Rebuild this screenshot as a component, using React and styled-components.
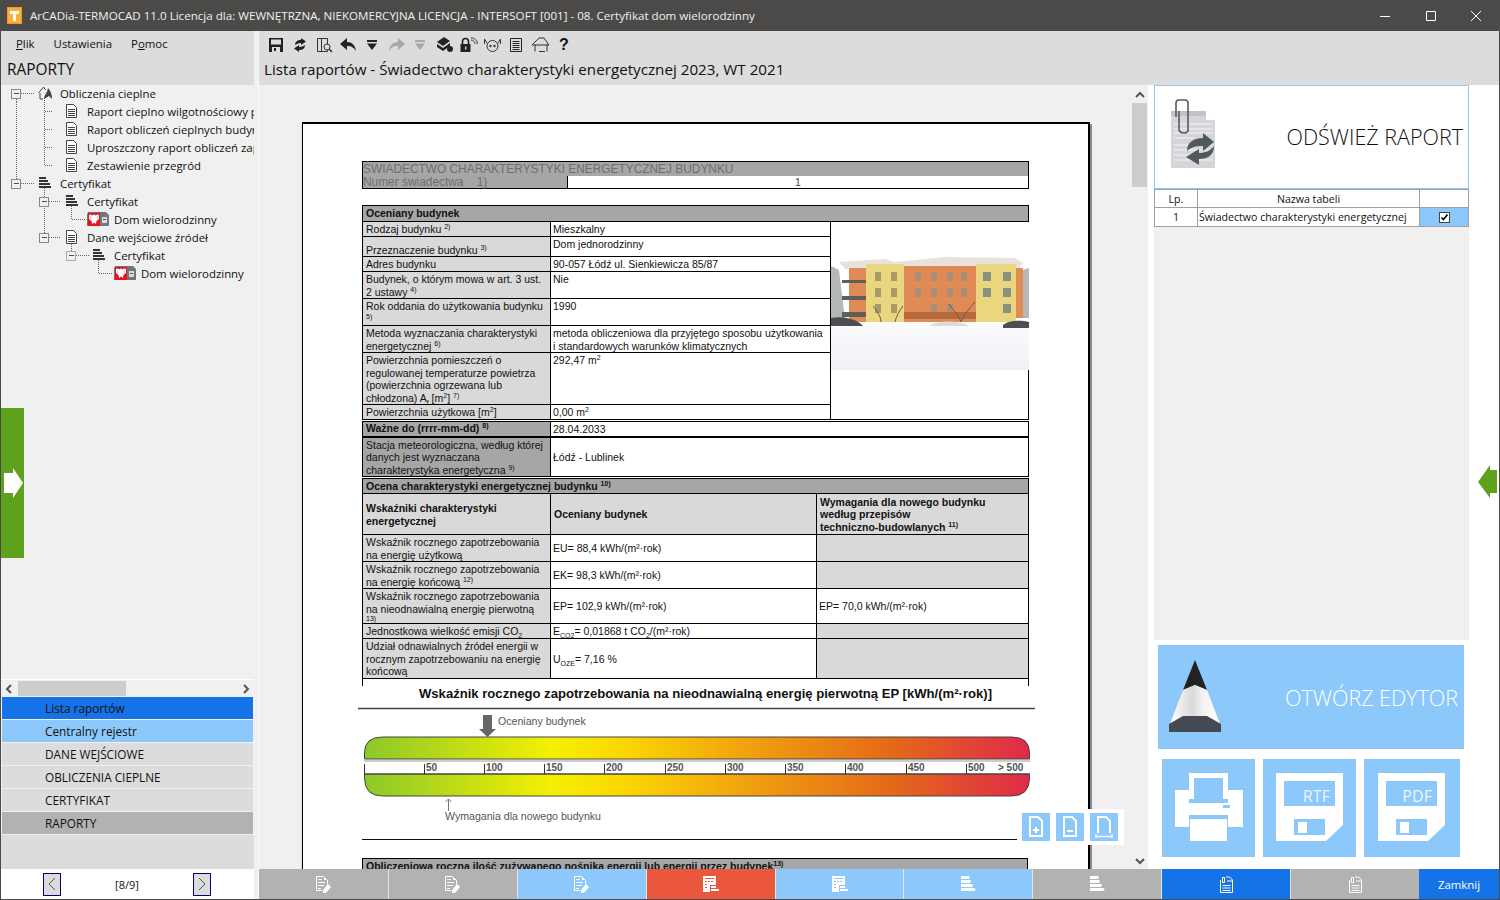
import React from "react";
import styled, { createGlobalStyle } from "styled-components";

const UI_FONT = `"Open Sans", "Noto Sans", sans-serif`;

// --- drawings ---

const AppLogo = () => (
  <svg width="15" height="17" viewBox="0 0 15 17">
    <rect width="15" height="17" fill="#f39a1e" />
    <rect x="1" y="1" width="13" height="15" fill="#f7b23d" />
    <path d="M3 4h9v3H9v7H6V7H3z" fill="#fff" />
  </svg>
);

const SaveIcon = () => (
  <svg width="16" height="16" viewBox="0 0 16 16">
    <path d="M1 1h14v14H1z" fill="#222" />
    <path d="M3 2.500h10v5H3z" fill="#ddd" />
    <path d="M4 10h8v5H4z" fill="#ddd" />
    <path d="M6 11h2v3H6z" fill="#222" />
  </svg>
);

const SyncIcon = () => (
  <svg width="16" height="16" viewBox="0 0 16 16" fill="#222">
    <path d="M3 8c0-3 2-5 6-5V1l5 3.500L9 8V6C6 6 5 7 3 8z" />
    <path d="M13 8c0 3-2 5-6 5v2l-5-3.500L7 8v2c3 0 4-1 6-2z" />
  </svg>
);

const PreviewIcon = () => (
  <svg width="17" height="16" viewBox="0 0 17 16" fill="none" stroke="#333">
    <path d="M1.500 1.500h10v13h-10zM5.500 1.500v13" />
    <circle cx="11" cy="10" r="3" fill="#ddd" />
    <path d="M13 12l3 3" strokeWidth="1.6" />
  </svg>
);

const UndoIcon = ({ color = "#222", flip }) => (
  <svg width="17" height="15" viewBox="0 0 17 15" fill={color}>
    <path
      transform={flip ? "matrix(-1 0 0 1 17 0)" : undefined}
      d="M7 1v4c5 0 8 3 9 9-2-3-4-5-9-5v4L0 7z"
    />
  </svg>
);

const DropIcon = ({ color = "#222" }) => (
  <svg width="12" height="12" viewBox="0 0 12 12" fill={color}>
    <path d="M1 1h10v2H1zM1 4.500h10L6 11z" />
  </svg>
);

const HatIcon = () => (
  <svg width="17" height="16" viewBox="0 0 17 16" fill="#222">
    <path d="M8 0l6 4-7 5-6-4z" />
    <path d="M1 7l6 4 7-5v3l-7 5-6-4z" />
    <circle cx="14" cy="12" r="3" />
  </svg>
);

const LockIcon = () => (
  <svg width="19" height="16" viewBox="0 0 19 16">
    <path d="M3.500 7V4.500a3 3 0 0 1 6 0V7" fill="none" stroke="#222" strokeWidth="1.6" />
    <path d="M1.500 7h10v8h-10z" fill="#222" />
    <path d="M6 9.500h1.400v3H6z" fill="#ddd" />
    <path d="M12 3c2 0 4 2 4 4M12 .8c3.500 0 6.400 3 6.400 6.200" fill="none" stroke="#333" />
  </svg>
);

const RobotIcon = () => (
  <svg width="19" height="16" viewBox="0 0 19 16" fill="none" stroke="#333">
    <circle cx="9.500" cy="9" r="5.500" />
    <path d="M4 6L1.500 2v5M15 6l2.500-4v5" />
    <circle cx="7.500" cy="9" r=".8" fill="#333" />
    <circle cx="11.500" cy="9" r=".8" fill="#333" />
  </svg>
);

const ListIcon = () => (
  <svg width="14" height="16" viewBox="0 0 14 16" fill="none" stroke="#222">
    <path d="M1.500 1.500h11v13h-11z" />
    <path d="M3.500 4.500h7M3.500 6.500h7M3.500 8.500h7M3.500 10.500h7M3.500 12.500h7" />
  </svg>
);

const HouseIcon = () => (
  <svg width="19" height="16" viewBox="0 0 19 16" fill="none" stroke="#333">
    <path d="M1 8l7-7h5l5 7M4 7.500v7M16 7.500v7M1 8h17" />
    <path d="M8 14.500h6" />
  </svg>
);

const RefreshDoc = () => (
  <svg width="46" height="70" viewBox="0 0 46 70">
    <path d="M1 12h35v9h9v48H1z" fill="#d6d6da" />
    <path d="M1 12h35v5H1z" fill="#c2c2c8" />
    <path d="M4 25h38M4 30h38M4 34h38M4 39h20M4 46h38M4 51h38M4 56h38M4 61h38" stroke="#f4f4f4" />
    <path d="M6 18V4q0-3 3-3h6q3 0 3 3v27q0 3-4 3t-5-3V12" fill="none" stroke="#555b63" strokeWidth="1.6" />
    <path d="M17 52c0-8 6-13 16-13v-5l11 9-11 9v-5c-7 0-12 1-16 5z" fill="#515960" />
    <path d="M44 47c0 9-6 13-15 13v6l-13-8 13-8v4c6 0 11-2 15-7z" fill="#515960" />
  </svg>
);

const Pencil = () => (
  <svg width="52" height="72" viewBox="0 0 52 72">
    <defs>
      <linearGradient id="penBody" x1="0" x2="1" y1="0" y2="0">
        <stop offset="0" stopColor="#fff" />
        <stop offset=".45" stopColor="#d9d9d9" />
        <stop offset=".65" stopColor="#f2f2f2" />
        <stop offset="1" stopColor="#fff" />
      </linearGradient>
    </defs>
    <path d="M26 0l12 30-12-5-12 5z" fill="#222" />
    <path d="M14 30l12-5 12 5 13 34-13-7H14L1 64z" fill="url(#penBody)" />
    <path d="M0 64l14-8h24l14 8v8H0z" fill="#454a52" />
  </svg>
);

const Printer = () => (
  <svg width="68" height="70" viewBox="0 0 68 70" fill="#fff">
    <path d="M14 0h39v26H14zM19 5v21h29V5z" fillRule="evenodd" />
    <path d="M0 17h14v13h39V17h15v37H53V42H14v12H0z" />
    <path d="M15 46h37v22H15z" />
    <path d="M48 32h7v3h-7z" fill="#8cc9fa" />
  </svg>
);

const Floppy = ({ label }) => (
  <svg width="68" height="70" viewBox="0 0 68 70">
    <path d="M0 0h67v52L50 68H0z" fill="#fff" />
    <path d="M8 8h51v25H8z" fill="#8cc9fa" />
    <text x="54" y="29" textAnchor="end" fontFamily="Noto Sans, sans-serif" fontSize="16" fill="#e6f3fe">{label}</text>
    <path d="M18 46h31v16H18z" fill="#8cc9fa" />
    <path d="M22 49h9v11h-9z" fill="#fff" />
  </svg>
);

const Magnify = ({ kind }) => (
  <svg width="18" height="22" viewBox="0 0 18 22" fill="none" stroke="#fff" strokeWidth="2">
    <path d={kind === "fit" ? "M3 17V1h8l4 4v12" : "M3 1h8l4 4v15H3z"} />
    {kind === "plus" && <path d="M9 11v6M6 14h6" />}
    {kind === "minus" && <path d="M6 15h6" />}
    {kind === "fit" && <path d="M1 20.500h16M1 18v5M17 18v5" strokeWidth="1.400" />}
  </svg>
);

const BarDocPen = () => (
  <svg width="15" height="17" viewBox="0 0 15 17">
    <path d="M.5.500h7l4 4v4M.5.500v14H6" fill="none" stroke="#fff" />
    <path d="M2 3h4v1H2zM2 6h7v1H2zM2 9h6v1H2zM2 12h3v1H2zM8 1v3h3z" fill="#fff" />
    <path d="M12 8l3 3-5 6H7v-3z" fill="#fff" />
  </svg>
);

const BarCalc = () => (
  <svg width="17" height="16" viewBox="0 0 17 16" fill="#fff">
    <path d="M1 0h13v9H8v7H1zM3 2v1h9V2zM3 5v1h2V5zM6 5v1h2V5zM9 5v1h2V5zM3 8v1h2V8zM3 11v1h2v-1z" fillRule="evenodd" />
    <path d="M9 10h5v2H9zM9 13h8v2H9z" />
  </svg>
);

const BarStack = () => (
  <svg width="15" height="16" viewBox="0 0 15 16" fill="#fff">
    <path d="M0 0h8l1 1.500L8 3H0zM0 4h9l1 1.500L9 7H0zM0 8h11l1 1.500L11 11H0zM0 12h13l2 1.500-2 1.500H0z" />
  </svg>
);

const BarClipDoc = () => (
  <svg width="14" height="17" viewBox="0 0 14 17" fill="none" stroke="#fff">
    <path d="M1.500 4v12.500h12V4l-3-3H7" />
    <path d="M3.500 1.500h2v5h-2zM8 5h5M3.500 9.500h8M3.500 12h8M3.500 14.500h8" />
  </svg>
);

const TREE_DOC = (x) => (
  <g transform={`translate(${x} 2)`} fill="none" stroke="#444">
    <path d="M.5.500h7l3 3v10h-10z" fill="#fff" />
    <path d="M2 5.500h7M2 7.500h7M2 9.500h7M2 11.500h7" />
  </g>
);

const TREE_STACK = (x) => (
  <g transform={`translate(${x} 3)`} fill="#333">
    <path d="M0 0h7v2H0zM0 3h9v2H0zM0 6h11v2H0zM0 9h12v2H0z" />
  </g>
);

const TREE_HOUSE = (x) => (
  <g transform={`translate(${x} 2)`}>
    <path d="M.5 7l5-6 2 3M2 7v6h3" fill="none" stroke="#444" />
    <path d="M6 13c0-4 3-5 4-11 3 3 4 7 4 11l-3-3z" fill="#444" />
  </g>
);

const TREE_CERT = (x) => (
  <g transform={`translate(${x} 2)`}>
    <path d="M1 0h18l3 3v11H0V3z" fill="#6f767d" />
    <path d="M1 1h12v13H1z" fill="#e8141c" />
    <path d="M7 2l1 1.500 2.500-1L12 3v4L9.500 9 9 12l-2-1.500L5 12l-.5-3L2 7V3l1.500-.5L6 3.500z" fill="#fff" />
    <path d="M3.500 4v3M10.500 4v3" stroke="#e8a0a0" strokeWidth=".6" />
    <path d="M15 5h5v6h-5z" fill="#d9d9d9" />
    <path d="M16 7h3v1h-3z" fill="#555" />
  </g>
);

const ICONS = { doc: TREE_DOC, stack: TREE_STACK, house: TREE_HOUSE, cert: TREE_CERT };

const TREE_ROWS = [
  { text: "Obliczenia cieplne", textX: 59, icon: "house", iconX: 37, box: 15, lines: "M15.500 9V18M20 9.500H33M43.500 14V18" },
  { text: "Raport cieplno wilgotnościowy przegród", textX: 86, icon: "doc", iconX: 65, lines: "M15.500 0V18M43.500 0V18M44 9.500H51" },
  { text: "Raport obliczeń cieplnych budynku", textX: 86, icon: "doc", iconX: 65, lines: "M15.500 0V18M43.500 0V18M44 9.500H51" },
  { text: "Uproszczony raport obliczeń zapotrzebowania", textX: 86, icon: "doc", iconX: 65, lines: "M15.500 0V18M43.500 0V18M44 9.500H51" },
  { text: "Zestawienie przegród", textX: 86, icon: "doc", iconX: 65, lines: "M15.500 0V18M43.500 0V9.500H51" },
  { text: "Certyfikat", textX: 59, icon: "stack", iconX: 38, box: 15, lines: "M15.500 0V5M20 9.500H33M43.500 14V18" },
  { text: "Certyfikat", textX: 86, icon: "stack", iconX: 65, box: 43, lines: "M43.500 0V18M48 9.500H60M70.500 14V18" },
  { text: "Dom wielorodzinny", textX: 113, icon: "cert", iconX: 86, lines: "M43.500 0V18M70.500 0V9.500H85" },
  { text: "Dane wejściowe źródeł", textX: 86, icon: "doc", iconX: 65, box: 43, lines: "M43.500 0V5M48 9.500H60M70.500 14V18" },
  { text: "Certyfikat", textX: 113, icon: "stack", iconX: 92, box: 70, light: true, lines: "M70.500 0V5M75 9.500H88M97.500 14V18" },
  { text: "Dom wielorodzinny", textX: 140, icon: "cert", iconX: 113, lines: "M97.500 0V9.500H112" },
];

const TreeRowItem = ({ row }) => (
  <TreeRow>
    <svg width={row.textX} height="18" viewBox={`0 0 ${row.textX} 18`}>
      <path d={row.lines} stroke="#666" strokeDasharray="1 1" fill="none" shapeRendering="crispEdges" />
      {row.box && (
        <g>
          <rect x={row.box - 4.5} y="5.500" width="9" height="9" fill="#f0f0f0" stroke={row.light ? "#aaa" : "#888"} />
          <path d={`M${row.box - 2} 9.500h5`} stroke="#36508c" shapeRendering="crispEdges" />
        </g>
      )}
      {ICONS[row.icon](row.iconX)}
    </svg>
    <TreeText>{row.text}</TreeText>
  </TreeRow>
);

const BuildingPhoto = () => (
  <svg width="198" height="148" viewBox="0 0 198 148">
    <defs>
      <linearGradient id="snow" x1="0" x2="0" y1="0" y2="1">
        <stop offset="0" stopColor="#fbfbfc" />
        <stop offset="1" stopColor="#eff1f5" />
      </linearGradient>
      <filter id="soft" x="0" y="0" width="1" height="1">
        <feGaussianBlur stdDeviation=".55" />
      </filter>
    </defs>
    <rect width="198" height="148" fill="#fff" />
    <g filter="url(#soft)">
      <path d="M0 44l8 4 6 50H0zM186 50l12-4v50h-12z" fill="#b4b8b6" />
      <path d="M8 40l46-3 10 3 50-5 70 1 8 5-4 6H14z" fill="#e8e2dc" />
      <path d="M18 46h17v54H18zM73 44h72v56H73zM185 46h7v50h-7z" fill="#e08a55" />
      <path d="M35 42h38v58H35zM145 42h40v58h-40z" fill="#ead67f" />
      <path d="M44 50h6v9h-6zM60 50h6v9h-6zM44 66h6v9h-6zM60 66h6v9h-6zM44 82h6v9h-6zM60 82h6v9h-6z" fill="#a79a68" />
      <path d="M84 50h6v9h-6zM100 50h6v9h-6zM116 50h6v9h-6zM130 50h6v9h-6zM84 66h6v9h-6zM100 66h6v9h-6zM116 66h6v9h-6zM130 66h6v9h-6zM100 82h6v9h-6zM116 82h6v9h-6z" fill="#a98e76" />
      <path d="M152 50h8v9h-8zM172 50h8v9h-8zM152 66h8v9h-8zM172 66h8v9h-8zM172 82h8v9h-8z" fill="#89907f" />
      <path d="M11 58h24v3H11zM11 74h24v4H11zM11 90h24v5H11z" fill="#5e5e58" />
      <path d="M73 90h72v7H73z" fill="#b86a3e" />
      <path d="M0 100h198v48H0z" fill="url(#snow)" />
      <path d="M0 96c10-2 25 0 32 8H0zM172 103c6-5 18-5 26-3v6h-26z" fill="#4c5052" />
      <path d="M98 104c8-6 30-6 40 0z" fill="#d9dcde" />
      <path d="M130 100c-3-8-8-12-12-18M130 100c3-8 9-14 14-20M50 100c0-6-5-12-8-16M64 100c1-6 5-12 8-16" stroke="#6a5a4a" fill="none" />
    </g>
  </svg>
);

const CHART_TICKS = [
  { x: 66, label: "50" }, { x: 126, label: "100" }, { x: 186, label: "150" }, { x: 246, label: "200" },
  { x: 307, label: "250" }, { x: 367, label: "300" }, { x: 427, label: "350" }, { x: 487, label: "400" },
  { x: 548, label: "450" }, { x: 608, label: "500" },
];

const EnergyChart = () => (
  <svg width="677" height="155" viewBox="0 0 677 155" fontFamily="Liberation Sans, Arial, sans-serif">
    <defs>
      <linearGradient id="scale" x1="0" x2="1" y1="0" y2="0">
        <stop offset="0" stopColor="#8cc82a" />
        <stop offset=".28" stopColor="#f4f000" />
        <stop offset=".38" stopColor="#fbd900" />
        <stop offset=".55" stopColor="#f2a80c" />
        <stop offset=".8" stopColor="#e4671a" />
        <stop offset="1" stopColor="#df2a4a" />
      </linearGradient>
    </defs>
    <rect width="677" height="155" fill="#fff" />
    <text x="347.500" y="12" textAnchor="middle" fontSize="13.1" fontWeight="700" fill="#111">
      Wskaźnik rocznego zapotrzebowania na nieodnawialną energię pierwotną EP [kWh/(m²·rok)]
    </text>
    <path d="M0 22.500h677" stroke="#444" strokeWidth="1.500" />
    <path d="M125 29h9v14h4l-8.500 8-8.500-8h4z" fill="#666" />
    <text x="140" y="39" fontSize="10.600" fill="#555">Oceniany budynek</text>
    <path d="M6.500 73v-6q0-16 18-16h629q18 0 18 16v6z" fill="url(#scale)" stroke="#444" />
    <path d="M6 75h666" stroke="#999" />
    <path d="M6.500 88v4q0 18 18 18h629q18 0 18-18v-4z" fill="url(#scale)" stroke="#444" />
    <path d="M6 88h666" stroke="#444" />
    <path d="M6.500 78v10" stroke="#333" />
    {CHART_TICKS.map((t) => (
      <g key={t.label}>
        <path d={`M${t.x}.5 78v10`} stroke="#333" />
        <text x={t.x + 2} y="85" fontSize="10" fontWeight="700" fill="#555">{t.label}</text>
      </g>
    ))}
    <text x="640" y="85" fontSize="10" fontWeight="700" fill="#555">&gt; 500</text>
    <path d="M90.500 125v-12m-3 3l3-3 3 3" fill="none" stroke="#777" />
    <text x="87" y="134" fontSize="10.600" fill="#555">Wymagania dla nowego budynku</text>
    <path d="M4 153.500h656" stroke="#111" />
  </svg>
);

// --- data ---

const NAV_ITEMS = [
  { label: "Lista raportów", tone: "strong", height: 22 },
  { label: "Centralny rejestr", tone: "light", height: 22 },
  { label: "DANE WEJŚCIOWE", tone: "plain", height: 22 },
  { label: "OBLICZENIA CIEPLNE", tone: "plain", height: 22 },
  { label: "CERTYFIKAT", tone: "plain", height: 22 },
  { label: "RAPORTY", tone: "dim", height: 22 },
];

const BAR_ITEMS = [
  { tone: "gray", icon: <BarDocPen /> },
  { tone: "gray", icon: <BarDocPen /> },
  { tone: "light", icon: <BarDocPen /> },
  { tone: "red", icon: <BarCalc /> },
  { tone: "light", icon: <BarCalc /> },
  { tone: "light", icon: <BarStack /> },
  { tone: "gray", icon: <BarStack /> },
  { tone: "strong", icon: <BarClipDoc /> },
  { tone: "gray", icon: <BarClipDoc /> },
];

const App = () => (
  <>
    <GlobalStyle />
    <Window>
      <TitleBar>
        <AppLogo />
        <TitleText>
          ArCADia-TERMOCAD 11.0 Licencja dla: WEWNĘTRZNA, NIEKOMERCYJNA LICENCJA - INTERSOFT [001] - 08. Certyfikat dom wielorodzinny
        </TitleText>
        <WindowButtons>
          <svg width="10" height="10" viewBox="0 0 10 10"><path d="M0 5.500h10" stroke="#fff" /></svg>
          <svg width="10" height="10" viewBox="0 0 10 10"><path d="M.5.500h9v9h-9z" stroke="#fff" fill="none" /></svg>
          <svg width="10" height="10" viewBox="0 0 10 10"><path d="M0 0l10 10M10 0L0 10" stroke="#fff" /></svg>
        </WindowButtons>
      </TitleBar>
      <Body>
        <LeftPanel>
          <LeftHeader>
            <Menu>
              <MenuItem><u>P</u>lik</MenuItem>
              <MenuItem>Ustawienia</MenuItem>
              <MenuItem>P<u>o</u>moc</MenuItem>
            </Menu>
            <PanelTitle>RAPORTY</PanelTitle>
          </LeftHeader>
          <Tree>
            {TREE_ROWS.map((row, i) => (
              <TreeRowItem key={i} row={row} />
            ))}
          </Tree>
          <HScroll>
            <ScrollChevron viewBox="0 0 8 10"><path d="M6 1L2 5l4 4" /></ScrollChevron>
            <HThumb />
            <ScrollChevron viewBox="0 0 8 10"><path d="M2 1l4 4-4 4" /></ScrollChevron>
          </HScroll>
          <Nav>
            {NAV_ITEMS.map((item) => (
              <NavItem key={item.label} $tone={item.tone} $height={item.height}>{item.label}</NavItem>
            ))}
          </Nav>
          <NavFiller />
          <Pager>
            <PagerButton>
              <svg width="8" height="14" viewBox="0 0 8 14"><path d="M7 1L1 7l6 6" fill="none" stroke="#555" /></svg>
            </PagerButton>
            <PagerLabel>[8/9]</PagerLabel>
            <PagerButton>
              <svg width="8" height="14" viewBox="0 0 8 14"><path d="M1 1l6 6-6 6" fill="none" stroke="#555" /></svg>
            </PagerButton>
          </Pager>
        </LeftPanel>
        <MainColumn>
          <MainHeader>
            <Toolbar>
              <ToolButton><SaveIcon /></ToolButton>
              <ToolButton><SyncIcon /></ToolButton>
              <ToolButton><PreviewIcon /></ToolButton>
              <ToolButton><UndoIcon /></ToolButton>
              <ToolButton><DropIcon /></ToolButton>
              <ToolButton><UndoIcon flip color="#a8a8a8" /></ToolButton>
              <ToolButton><DropIcon color="#a8a8a8" /></ToolButton>
              <ToolButton><HatIcon /></ToolButton>
              <ToolButton><LockIcon /></ToolButton>
              <ToolButton><RobotIcon /></ToolButton>
              <ToolButton><ListIcon /></ToolButton>
              <ToolButton><HouseIcon /></ToolButton>
              <ToolButton><HelpMark>?</HelpMark></ToolButton>
            </Toolbar>
            <MainTitle>Lista raportów - Świadectwo charakterystyki energetycznej 2023, WT 2021</MainTitle>
          </MainHeader>
          <Workspace>
            <Viewport>
              <Page>
                <HeadTable>
                  <colgroup><col width="205" /><col width="461" /></colgroup>
                  <tbody>
                    <Row $h={14}><HeadCell colSpan={2}>ŚWIADECTWO CHARAKTERYSTYKI ENERGETYCZNEJ BUDYNKU</HeadCell></Row>
                    <Row $h={13}>
                      <HeadCell>Numer świadectwa&nbsp;&nbsp;&nbsp; 1)</HeadCell>
                      <HeadValue>1</HeadValue>
                    </Row>
                  </tbody>
                </HeadTable>

                <SheetTable $gap={16}>
                  <colgroup><col width="188" /><col width="280" /><col width="198" /></colgroup>
                  <tbody>
                    <Row $h={16}><TitleCell colSpan={3}>Oceniany budynek</TitleCell></Row>
                    <Row $h={15}>
                      <LabelCell>Rodzaj budynku <Sup>2)</Sup></LabelCell>
                      <Cell>Mieszkalny</Cell>
                      <PhotoCell rowSpan={8}><BuildingPhoto /></PhotoCell>
                    </Row>
                    <Row $h={20}>
                      <LabelCell $align="bottom">Przeznaczenie budynku <Sup>3)</Sup></LabelCell>
                      <Cell>Dom jednorodzinny</Cell>
                    </Row>
                    <Row $h={15}><LabelCell>Adres budynku</LabelCell><Cell>90-057 Łódź ul. Sienkiewicza 85/87</Cell></Row>
                    <Row $h={27}>
                      <LabelCell>Budynek, o którym mowa w art. 3 ust. 2 ustawy <Sup>4)</Sup></LabelCell>
                      <Cell>Nie</Cell>
                    </Row>
                    <Row $h={27}>
                      <LabelCell>Rok oddania do użytkowania budynku <Sup>5)</Sup></LabelCell>
                      <Cell>1990</Cell>
                    </Row>
                    <Row $h={27}>
                      <LabelCell>Metoda wyznaczania charakterystyki energetycznej <Sup>6)</Sup></LabelCell>
                      <Cell>metoda obliczeniowa dla przyjętego sposobu użytkowania<br />i standardowych warunków klimatycznych</Cell>
                    </Row>
                    <Row $h={52}>
                      <LabelCell>Powierzchnia pomieszczeń o regulowanej temperaturze powietrza (powierzchnia ogrzewana lub chłodzona) A<Sub>f</Sub> [m<Sup>2</Sup>] <Sup>7)</Sup></LabelCell>
                      <Cell>292,47 m<Sup>2</Sup></Cell>
                    </Row>
                    <Row $h={14}>
                      <LabelCell>Powierzchnia użytkowa [m<Sup>2</Sup>]</LabelCell>
                      <Cell>0,00 m<Sup>2</Sup></Cell>
                    </Row>
                  </tbody>
                </SheetTable>

                <SheetTable $gap={1}>
                  <colgroup><col width="188" /><col width="478" /></colgroup>
                  <tbody>
                    <Row $h={15}>
                      <TitleCell>Ważne do (rrrr-mm-dd) <Sup>8)</Sup></TitleCell>
                      <Cell>28.04.2033</Cell>
                    </Row>
                  </tbody>
                </SheetTable>

                <SheetTable $gap={0}>
                  <colgroup><col width="188" /><col width="478" /></colgroup>
                  <tbody>
                    <Row $h={39}>
                      <DarkCell>Stacja meteorologiczna, według której danych jest wyznaczana charakterystyka energetyczna <Sup>9)</Sup></DarkCell>
                      <Cell $align="middle">Łódź - Lublinek</Cell>
                    </Row>
                  </tbody>
                </SheetTable>

                <SheetTable $gap={1}>
                  <colgroup><col width="188" /><col width="266" /><col width="212" /></colgroup>
                  <tbody>
                    <Row $h={15}><TitleCell colSpan={3}>Ocena charakterystyki energetycznej budynku <Sup>10)</Sup></TitleCell></Row>
                    <Row $h={41}>
                      <LabelCell $strong $align="middle">Wskaźniki charakterystyki<br />energetycznej</LabelCell>
                      <LabelCell $strong $align="middle">Oceniany budynek</LabelCell>
                      <LabelCell $strong $align="middle">Wymagania dla nowego budynku<br />według przepisów<br />techniczno-budowlanych <Sup>11)</Sup></LabelCell>
                    </Row>
                    <Row $h={27}>
                      <LabelCell>Wskaźnik rocznego zapotrzebowania na energię użytkową</LabelCell>
                      <Cell $align="middle">EU= 88,4 kWh/(m²·rok)</Cell>
                      <LabelCell />
                    </Row>
                    <Row $h={27}>
                      <LabelCell>Wskaźnik rocznego zapotrzebowania na energię końcową <Sup>12)</Sup></LabelCell>
                      <Cell $align="middle">EK= 98,3 kWh/(m²·rok)</Cell>
                      <LabelCell />
                    </Row>
                    <Row $h={35}>
                      <LabelCell><Clipped>Wskaźnik rocznego zapotrzebowania na nieodnawialną energię pierwotną<br /><Sup>13)</Sup></Clipped></LabelCell>
                      <Cell $align="middle">EP= 102,9 kWh/(m²·rok)</Cell>
                      <Cell $align="middle">EP= 70,0 kWh/(m²·rok)</Cell>
                    </Row>
                    <Row $h={15}>
                      <LabelCell>Jednostkowa wielkość emisji CO<Sub>2</Sub></LabelCell>
                      <Cell>E<Sub>CO2</Sub>= 0,01868 t CO<Sub>2</Sub>/(m²·rok)</Cell>
                      <LabelCell />
                    </Row>
                    <Row $h={39}>
                      <LabelCell>Udział odnawialnych źródeł energii w rocznym zapotrzebowaniu na energię końcową</LabelCell>
                      <Cell $align="middle">U<Sub>OZE</Sub>= 7,16 %</Cell>
                      <LabelCell />
                    </Row>
                    <StubRow><StubCell colSpan={3} /></StubRow>
                  </tbody>
                </SheetTable>

                <ChartWrap><EnergyChart /></ChartWrap>

                <SheetTable $gap={17}>
                  <tbody>
                    <Row $h={16}>
                      <TitleCell>Obliczeniowa roczna ilość zużywanego nośnika energii lub energii przez budynek<Sup>13)</Sup></TitleCell>
                    </Row>
                  </tbody>
                </SheetTable>
              </Page>
              <ZoomBox>
                <ZoomButton><Magnify kind="plus" /></ZoomButton>
                <ZoomButton><Magnify kind="minus" /></ZoomButton>
                <ZoomButton><Magnify kind="fit" /></ZoomButton>
              </ZoomBox>
            </Viewport>
            <VScroll>
              <ScrollChevron viewBox="0 0 10 8"><path d="M1 6l4-4 4 4" /></ScrollChevron>
              <VThumb />
              <ScrollChevron viewBox="0 0 10 8"><path d="M1 2l4 4 4-4" /></ScrollChevron>
            </VScroll>
            <SidePanel>
              <RefreshCard>
                <RefreshDoc />
                <RefreshLabel>ODŚWIEŻ RAPORT</RefreshLabel>
              </RefreshCard>
              <ReportTable>
                <colgroup><col width="43" /><col width="222" /><col width="49" /></colgroup>
                <tbody>
                  <tr>
                    <ReportCell>Lp.</ReportCell>
                    <ReportCell>Nazwa tabeli</ReportCell>
                    <ReportCell />
                  </tr>
                  <tr>
                    <ReportCell $height={19}>1</ReportCell>
                    <ReportCell $height={19} $left>Świadectwo charakterystyki energetycznej</ReportCell>
                    <CheckCell $height={19}>
                      <svg width="11" height="11" viewBox="0 0 11 11">
                        <rect x=".5" y=".5" width="10" height="10" fill="#fff" stroke="#444" />
                        <path d="M2.500 5.500l2 2 4-5" fill="none" stroke="#000" strokeWidth="1.600" />
                      </svg>
                    </CheckCell>
                  </tr>
                </tbody>
              </ReportTable>
              <SideFiller />
              <EditorButton>
                <Pencil />
                <EditorLabel>OTWÓRZ EDYTOR</EditorLabel>
              </EditorButton>
              <ExportRow>
                <ExportButton $width={93}><Printer /></ExportButton>
                <ExportButton $width={93}><Floppy label="RTF" /></ExportButton>
                <ExportButton $width={96}><Floppy label="PDF" /></ExportButton>
              </ExportRow>
            </SidePanel>
            <SideMargin>
              <SideArrow viewBox="0 0 20 33"><path d="M0 17L12 0v5h7v23h-7v5z" /></SideArrow>
            </SideMargin>
          </Workspace>
          <BottomBar>
            {BAR_ITEMS.map((item, i) => (
              <BarButton key={i} $tone={item.tone}>{item.icon}</BarButton>
            ))}
            <CloseButton>Zamknij</CloseButton>
          </BottomBar>
        </MainColumn>
        <GreenTab>
          <svg width="19" height="30" viewBox="0 0 19 30"><path d="M0 5h9V0l10 15L9 30v-5H0z" fill="#fff" /></svg>
        </GreenTab>
      </Body>
    </Window>
  </>
);

const GlobalStyle = createGlobalStyle`
  html, body {
    margin: 0;
    padding: 0;
    background: #fff;
  }
  * {
    box-sizing: border-box;
  }
`;

const Window = styled.div`
  width: 1500px;
  height: 900px;
  display: flex;
  flex-direction: column;
  overflow: hidden;
  border: 1px solid #4b4a48;
  border-top: 0;
  background: #fff;
  font-family: ${UI_FONT};
  color: #111;
`;

const TitleBar = styled.header`
  height: 31px;
  flex-shrink: 0;
  margin: 0 -1px;
  padding-left: 7px;
  display: flex;
  align-items: center;
  background: #4b4a48;
`;

const TitleText = styled.div`
  margin-left: 8px;
  font-size: 11.6px;
  color: #f0f0f0;
  white-space: nowrap;
`;

const WindowButtons = styled.div`
  margin-left: auto;
  width: 120px;
  padding-right: 19px;
  display: flex;
  justify-content: space-between;
`;

const Body = styled.div`
  flex: 1;
  min-height: 0;
  display: flex;
  position: relative;
`;

const LeftPanel = styled.aside`
  width: 258px;
  flex-shrink: 0;
  display: flex;
  flex-direction: column;
  background: #f0f0f0;
  border-right: 1px solid #fafafa;
`;

const LeftHeader = styled.div`
  width: 253px;
  height: 54px;
  flex-shrink: 0;
  padding: 4px 0 0 6px;
  background: #dcdcdc;
`;

const Menu = styled.nav`
  display: flex;
  height: 17px;
  align-items: center;
`;

const MenuItem = styled.span`
  font-size: 11.4px;
  margin-left: 9px;
  margin-right: 10px;
`;

const PanelTitle = styled.div`
  margin-top: 7px;
  font-size: 15.4px;
`;

const Tree = styled.div`
  width: 253px;
  height: 595px;
  margin-top: -1px;
  flex-shrink: 0;
  overflow: hidden;
`;

const TreeRow = styled.div`
  height: 18px;
  display: flex;
  align-items: center;
  white-space: nowrap;
  svg {
    flex-shrink: 0;
  }
`;

const TreeText = styled.span`
  font-size: 11.4px;
`;

const HScroll = styled.div`
  width: 253px;
  height: 18px;
  flex-shrink: 0;
  display: flex;
  align-items: center;
  border-top: 1px solid #fff;
  background: #f0f0f0;
  svg:last-child {
    margin-left: auto;
    margin-right: 3px;
  }
`;

const ScrollChevron = styled.svg`
  width: 10px;
  height: 10px;
  margin: 3px;
  flex-shrink: 0;
  fill: none;
  stroke: #555;
  stroke-width: 2;
`;

const HThumb = styled.div`
  width: 108px;
  height: 15px;
  margin-left: 1px;
  background: #cdcdcd;
`;

const Nav = styled.div`
  width: 251px;
  margin-left: 1px;
  display: flex;
  flex-direction: column;
  gap: 1px;
`;

const NAV_TONES = {
  strong: "#1473e6",
  light: "#8cc9fa",
  plain: "#dcdcdc",
  dim: "#b2b2b2",
};

const NavItem = styled.div`
  height: ${(p) => p.$height}px;
  padding-left: 43px;
  display: flex;
  align-items: center;
  font-size: 11.8px;
  background: ${(p) => NAV_TONES[p.$tone]};
`;

const NavFiller = styled.div`
  width: 253px;
  flex: 1;
  margin-top: 1px;
  background: #dcdcdc;
`;

const Pager = styled.div`
  width: 253px;
  height: 30px;
  flex-shrink: 0;
  padding: 0 43px 0 42px;
  display: flex;
  align-items: center;
  justify-content: space-between;
  background: #fff;
`;

const PagerButton = styled.div`
  width: 18px;
  height: 23px;
  display: flex;
  align-items: center;
  justify-content: center;
  background: #dcdcdc;
  border: 1px solid #000080;
`;

const PagerLabel = styled.span`
  font-size: 11px;
`;

const MainColumn = styled.div`
  flex: 1;
  min-width: 0;
  display: flex;
  flex-direction: column;
`;

const MainHeader = styled.div`
  height: 54px;
  flex-shrink: 0;
  padding-left: 5px;
  background: #dcdcdc;
`;

const Toolbar = styled.div`
  display: flex;
  height: 27px;
  align-items: center;
`;

const ToolButton = styled.div`
  width: 24px;
  height: 24px;
  display: flex;
  align-items: center;
  justify-content: center;
`;

const HelpMark = styled.span`
  font-family: "Liberation Sans", Arial, sans-serif;
  font-size: 16px;
  font-weight: 700;
`;

const MainTitle = styled.div`
  margin-top: 1px;
  font-size: 15.2px;
  white-space: nowrap;
`;

const Workspace = styled.div`
  flex: 1;
  min-height: 0;
  display: flex;
`;

const Viewport = styled.div`
  width: 872px;
  flex-shrink: 0;
  position: relative;
  overflow: hidden;
  padding: 37px 0 0 43px;
  background: #f0f0f0;
`;

const Page = styled.div`
  width: 788px;
  min-height: 1100px;
  padding: 37px 0 0 59px;
  background: #fff;
  border: 1px solid #000;
  border-top-width: 2px;
  border-right-width: 2px;
  box-shadow: 2px 2px 0 #8a8a8a, -1px 0 0 #ddd;
  font-family: "Liberation Sans", Arial, sans-serif;
  font-size: 10.5px;
  line-height: 12.5px;
`;

const HeadTable = styled.table`
  width: 666px;
  table-layout: fixed;
  border-collapse: collapse;
  border: 1px solid #000;
`;

const HeadCell = styled.td`
  padding: 0;
  font-size: 11.9px;
  line-height: 12px;
  color: #6e6e6e;
  background: #a6a6a6;
  white-space: nowrap;
`;

const HeadValue = styled.td`
  padding: 0;
  text-align: center;
  color: #444;
  background: #fff;
  border-left: 1px solid #000;
`;

const SheetTable = styled.table`
  width: 666px;
  margin-top: ${(p) => p.$gap}px;
  table-layout: fixed;
  border-collapse: collapse;
  color: #111;
`;

const Row = styled.tr`
  height: ${(p) => p.$h}px;
`;

const Cell = styled.td`
  padding: 1px 2px 0;
  border: 1px solid #000;
  vertical-align: ${(p) => p.$align || "top"};
  background: #fff;
`;

const LabelCell = styled(Cell)`
  padding-left: 3px;
  background: #d9d9d9;
  font-weight: ${(p) => (p.$strong ? 700 : 400)};
`;

const TitleCell = styled(Cell)`
  padding: 0 3px;
  background: #a6a6a6;
  font-weight: 700;
  vertical-align: middle;
`;

const DarkCell = styled(Cell)`
  padding-left: 3px;
  background: #a6a6a6;
  vertical-align: middle;
`;

const PhotoCell = styled(Cell)`
  padding: 0;
  svg {
    display: block;
  }
`;

const Sup = styled.sup`
  font-size: 7px;
  line-height: 0;
`;

const Sub = styled.sub`
  font-size: 7px;
  line-height: 0;
`;

const Clipped = styled.div`
  height: 33px;
  overflow: hidden;
`;

const StubRow = styled.tr`
  height: 8px;
`;

const StubCell = styled.td`
  padding: 0;
  border-left: 1px solid #000;
  border-right: 1px solid #000;
`;

const ChartWrap = styled.div`
  margin-left: -4px;
  svg {
    display: block;
  }
`;

const ZoomBox = styled.div`
  position: absolute;
  left: 758px;
  top: 724px;
  width: 107px;
  height: 36px;
  padding-left: 5px;
  display: flex;
  align-items: center;
  gap: 6px;
  background: #fff;
`;

const ZoomButton = styled.div`
  width: 28px;
  height: 28px;
  display: flex;
  align-items: center;
  justify-content: center;
  background: #8cc9fa;
`;

const VScroll = styled.div`
  width: 17px;
  padding-top: 2px;
  flex-shrink: 0;
  display: flex;
  flex-direction: column;
  align-items: center;
  background: #f0f0f0;
  svg:last-child {
    margin-top: auto;
  }
`;

const VThumb = styled.div`
  width: 15px;
  height: 84px;
  background: #cdcdcd;
`;

const SidePanel = styled.section`
  width: 315px;
  margin-left: 6px;
  flex-shrink: 0;
  display: flex;
  flex-direction: column;
`;

const RefreshCard = styled.div`
  height: 104px;
  flex-shrink: 0;
  padding: 13px 5px 0 15px;
  display: flex;
  align-items: flex-start;
  justify-content: space-between;
  background: #fff;
  border: 1px solid #8cc9fa;
`;

const RefreshLabel = styled.div`
  margin-top: 23px;
  font-size: 21.5px;
  font-weight: 300;
  color: #111;
`;

const ReportTable = styled.table`
  width: 314px;
  flex-shrink: 0;
  table-layout: fixed;
  border-collapse: collapse;
`;

const ReportCell = styled.td`
  height: ${(p) => p.$height || 18}px;
  padding: 0 1px;
  border: 1px solid #a0a0a0;
  font-size: 10.6px;
  text-align: ${(p) => (p.$left ? "left" : "center")};
  white-space: nowrap;
  background: #fff;
`;

const CheckCell = styled(ReportCell)`
  background: #8cc9fa;
  border-left: 1px solid #111;
  svg {
    display: block;
    margin: 0 auto;
  }
`;

const SideFiller = styled.div`
  flex: 1;
  background: #f0f0f0;
`;

const EditorButton = styled.div`
  width: 306px;
  height: 104px;
  margin: 5px 0 0 4px;
  flex-shrink: 0;
  padding: 15px 6px 0 11px;
  display: flex;
  align-items: flex-start;
  justify-content: space-between;
  background: #8cc9fa;
`;

const EditorLabel = styled.div`
  margin-top: 23px;
  font-size: 21.5px;
  font-weight: 300;
  color: #fff;
`;

const ExportRow = styled.div`
  height: 98px;
  margin: 10px 0 12px 8px;
  flex-shrink: 0;
  display: flex;
  gap: 8px;
`;

const ExportButton = styled.div`
  width: ${(p) => p.$width}px;
  display: flex;
  align-items: center;
  justify-content: center;
  background: #8cc9fa;
`;

const SideMargin = styled.div`
  flex: 1;
  display: flex;
  align-items: flex-start;
  padding: 380px 0 0 9px;
`;

const SideArrow = styled.svg`
  width: 20px;
  height: 33px;
  fill: #5ea11d;
`;

const BottomBar = styled.footer`
  height: 30px;
  flex-shrink: 0;
  display: grid;
  grid-template-columns: repeat(9, 1fr) 80px;
  background: #fff;
`;

const BAR_TONES = {
  gray: "#b2b2b2",
  light: "#8cc9fa",
  red: "#ea573c",
  strong: "#1473e6",
};

const BarButton = styled.div`
  display: flex;
  align-items: center;
  justify-content: center;
  background: ${(p) => BAR_TONES[p.$tone]};
  border-left: 1px solid #e4e4e4;
  &:first-child {
    border-left: 0;
  }
`;

const CloseButton = styled.div`
  display: flex;
  align-items: center;
  justify-content: center;
  font-size: 11.4px;
  color: #fff;
  background: #1473e6;
`;

const GreenTab = styled.div`
  position: absolute;
  left: -1px;
  top: 377px;
  width: 24px;
  height: 150px;
  padding-left: 4px;
  display: flex;
  align-items: center;
  background: #5ea11d;
`;

export default App;
